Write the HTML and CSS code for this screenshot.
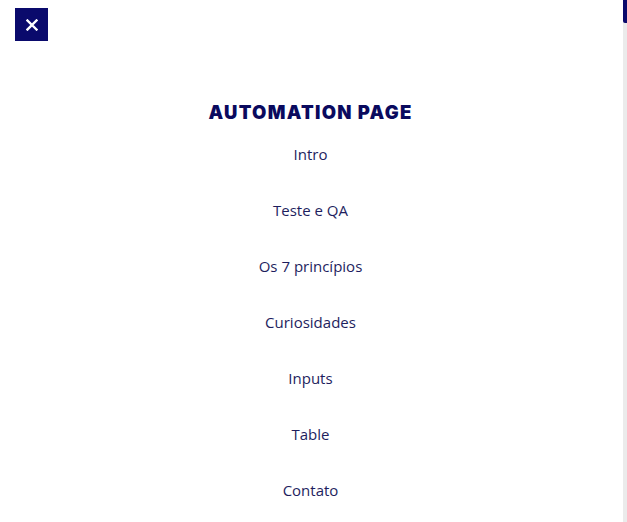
FILE: index.html
```html
<!DOCTYPE html>
<html lang="pt">
<head>
<meta charset="utf-8">
<link rel="stylesheet" href="styles.css">
<title>Automation Page</title>
</head>
<body>
<div class="page">
  <div class="overlay">
    <button class="close" aria-label="Fechar">
      <svg width="12" height="12" viewBox="0 0 12 12"><path d="M1.5 1.5L10.5 10.5M10.5 1.5L1.5 10.5" stroke="#fff" stroke-width="2.4" stroke-linecap="square"/></svg>
    </button>
    <nav class="menu">
      <h1 class="brand">AUTOMATION PAGE</h1>
      <a class="item" href="#">Intro</a>
      <a class="item" href="#">Teste e QA</a>
      <a class="item" href="#">Os 7 princípios</a>
      <a class="item" href="#">Curiosidades</a>
      <a class="item" href="#">Inputs</a>
      <a class="item" href="#">Table</a>
      <a class="item" href="#">Contato</a>
    </nav>
  </div>
  <div class="scrollbar"><div class="thumb"></div></div>
</div>
</body>
</html>
```
FILE: styles.css
```css
html, body {
  margin: 0;
  padding: 0;
  background: #fff;
  overflow: hidden;
}
.page {
  display: flex;
  width: 627px;
  height: 522px;
}
.overlay {
  flex: 1;
  position: relative;
}
.close {
  position: absolute;
  left: 15px;
  top: 8px;
  width: 33px;
  height: 33px;
  border: 0;
  padding: 0;
  background: #0a0a6c;
  display: flex;
  align-items: center;
  justify-content: center;
  cursor: pointer;
}
.menu {
  display: flex;
  flex-direction: column;
  align-items: center;
  padding-top: 100px;
  padding-right: 2px;
}
.brand {
  margin: 0 0 2px;
  font-family: "Inter", "Lato", sans-serif;
  font-weight: 900;
  font-size: 18.5px;
  line-height: 24px;
  letter-spacing: 1.3px;
  color: #0a0a5e;
}
.item {
  font-family: "Open Sans", sans-serif;
  font-size: 15px;
  line-height: 56px;
  height: 56px;
  color: #1e1e5e;
  text-decoration: none;
}
.scrollbar {
  width: 4px;
  background: #ebebeb;
}
.thumb {
  height: 23px;
  background: #0a0a6c;
  border-bottom-left-radius: 2px;
}
```
